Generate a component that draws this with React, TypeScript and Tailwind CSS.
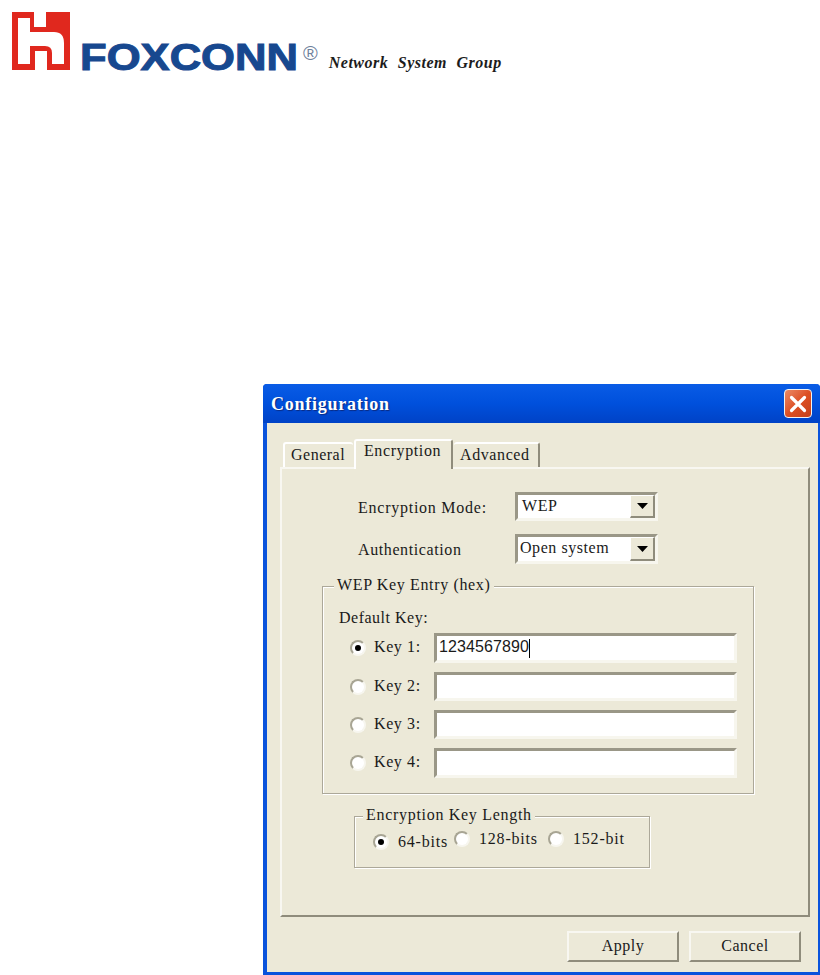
const serif = 'font-["Liberation_Serif",serif]';

function FoxconnLogo() {
  return (
    <div className="flex items-start">
      <svg width="60" height="60" viewBox="12 12 60 60" className="shrink-0">
        <rect x="12" y="12" width="58" height="58" fill="#e0281e" />
        <path d="M18 18H30V32H54Q64 32 64 43V64H52V53Q52 46 45 46H30V64H18Z" fill="#fff" />
        <rect x="34" y="12" width="12" height="15" fill="#fff" />
        <rect x="35" y="51" width="12" height="19" fill="#fff" />
      </svg>
      <svg width="224" height="70" viewBox="0 0 224 70" className="ml-[6px] shrink-0 overflow-visible">
        <text
          x="2"
          y="58"
          fontFamily="Liberation Sans, sans-serif"
          fontWeight="700"
          fontSize="36"
          textLength="218"
          lengthAdjust="spacingAndGlyphs"
          fill="#17488f"
          stroke="#17488f"
          strokeWidth="1"
        >
          FOXCONN
        </text>
      </svg>
      <span className='mt-[29px] ml-[1px] text-[20px] leading-[24px] text-[#6f7f9c] font-["Liberation_Sans",sans-serif]'>®</span>
      <span className={`mt-[41px] ml-[11px] text-[16px] leading-[20px] font-bold italic tracking-[0.5px] whitespace-nowrap text-[#1c1c1c] [word-spacing:5px] ${serif}`}>
        Network System Group
      </span>
    </div>
  );
}

function Radio({ checked = false }: { checked?: boolean }) {
  return (
    <span className="flex h-[16px] w-[16px] shrink-0 items-center justify-center rounded-full border-2 border-t-[#a8a594] border-r-[#f7f6ef] border-b-[#f7f6ef] border-l-[#a8a594] bg-white">
      {checked && <span className="h-[6px] w-[6px] rounded-full bg-black" />}
    </span>
  );
}

function Combo({ value, height, indent }: { value: string; height: string; indent: string }) {
  return (
    <div className={`flex w-[143px] items-stretch border-[3px] border-t-[#9a9787] border-r-[#f7f6ee] border-b-[#f7f6ee] border-l-[#9a9787] bg-white ${height}`}>
      <span className={`flex-1 text-[16px] leading-[21px] tracking-[0.55px] text-[#1a1a1a] ${indent}`}>{value}</span>
      <span className="flex w-[25px] items-center justify-center border-t border-r-2 border-b-2 border-l border-t-white border-r-[#8f8c7c] border-b-[#8f8c7c] border-l-white bg-[#ece9d8]">
        <svg width="11" height="6" viewBox="0 0 11 6">
          <path d="M0 0H11L5.5 6Z" fill="#000" />
        </svg>
      </span>
    </div>
  );
}

function KeyRow({ label, value, checked, height }: { label: string; value?: string; checked?: boolean; height: string }) {
  return (
    <div className="flex items-center">
      <Radio checked={checked} />
      <span className="ml-2 w-[60px] pb-[2px] text-[16px] leading-[20px] tracking-[0.6px] text-[#1a1a1a]">{label}</span>
      <div className={`flex w-[303px] items-center border-[3px] border-t-[#9a9787] border-r-[#f7f6ee] border-b-[#f7f6ee] border-l-[#9a9787] bg-white pl-[2px] ${height}`}>
        {value && (
          <>
            <span className='pb-[2px] text-[16px] leading-[20px] tracking-[0.1px] text-[#1a1a1a] font-["Liberation_Sans",sans-serif]'>{value}</span>
            <span className="h-[19px] w-px bg-black" />
          </>
        )}
      </div>
    </div>
  );
}

export default function App() {
  return (
    <div className={`h-[975px] w-[820px] overflow-hidden bg-white ${serif}`}>
      <header className="h-[384px] pt-[12px] pl-[12px]">
        <FoxconnLogo />
      </header>

      <div className="ml-[263px] flex h-[591px] w-[557px] flex-col rounded-t-[4px] border-r-2 border-b-[3px] border-l-4 border-[#0a53dc] bg-[#ece9d8]">
        {/* Title bar */}
        <div className="-ml-1 -mr-[2px] flex h-[39px] shrink-0 items-center justify-between rounded-t-[4px] bg-gradient-to-b from-[#0a5ce6] via-[#0050dc] to-[#0042c6] pr-[8px] pl-[8px]">
          <span className="pt-[2px] text-[18px] font-bold tracking-[0.75px] text-white [text-shadow:1px_1px_1px_#0a2a80]">Configuration</span>
          <span className="flex h-[29px] w-[28px] items-center justify-center rounded-[4px] border border-[#f2f2f2] bg-gradient-to-br from-[#ea8a66] via-[#dd4f22] to-[#c5401a]">
            <svg width="18" height="18" viewBox="0 0 18 18">
              <path d="M2.5 2.5L15.5 15.5M15.5 2.5L2.5 15.5" stroke="#fff" strokeWidth="3.2" strokeLinecap="round" />
            </svg>
          </span>
        </div>

        <div className="pt-[16px] pl-[13px]">
          {/* Tabs */}
          <div className="flex h-[28px] items-end pl-[3px] text-[16px] tracking-[0.5px] text-[#1a1a1a]">
            <div className="flex h-[25px] w-[70px] items-center rounded-t-[3px] border-t-2 border-l-2 border-white pb-[2px] pl-[6px]">General</div>
            <div className="relative z-10 -mb-[2px] ml-px flex h-[30px] w-[99px] items-start rounded-t-[3px] border-t-2 border-r-2 border-l-2 border-t-white border-r-[#8f8c7c] border-l-white bg-[#ece9d8] pl-[8px] leading-[20px] tracking-[0.6px]">Encryption</div>
            <div className="ml-px flex h-[25px] w-[86px] items-center rounded-t-[3px] border-t-2 border-r-2 border-t-white border-r-[#8f8c7c] pb-[2px] pl-[6px] tracking-[0.6px]">Advanced</div>
          </div>

          {/* Tab panel */}
          <div className="h-[450px] w-[530px] border-2 border-t-[#f8f7f1] border-r-[#8f8c7c] border-b-[#8f8c7c] border-l-[#f8f7f1] pt-[23px] text-[#1a1a1a]">
            <div className="flex items-center pl-[76px]">
              <span className="w-[157px] pt-[2px] text-[16px] leading-[20px] tracking-[0.75px]">Encryption Mode:</span>
              <Combo value="WEP" height="h-[29px]" indent="pl-[4px]" />
            </div>
            <div className="mt-[13px] flex items-center pl-[76px]">
              <span className="w-[157px] pt-[2px] text-[16px] leading-[20px] tracking-[0.6px]">Authentication</span>
              <Combo value="Open system" height="h-[30px]" indent="pl-[2px]" />
            </div>

            {/* WEP keys */}
            <div className="relative mt-[22px] ml-[40px] h-[208px] w-[432px] border border-[#aca899] pt-[21px] pl-[16px] shadow-[inset_1px_1px_0_#fff,1px_1px_0_#fff]">
              <span className="absolute -top-[12px] left-[11px] bg-[#ece9d8] px-[3px] text-[16px] leading-[20px] tracking-[0.65px]">WEP Key Entry (hex)</span>
              <div className="text-[16px] leading-[20px] tracking-[0.5px]">Default Key:</div>
              <div className="mt-[5px] ml-[11px] flex flex-col gap-[9px]">
                <KeyRow label="Key 1:" value="1234567890" checked height="h-[30px]" />
                <KeyRow label="Key 2:" height="h-[29px]" />
                <KeyRow label="Key 3:" height="h-[29px]" />
                <KeyRow label="Key 4:" height="h-[30px]" />
              </div>
            </div>

            {/* Key length */}
            <div className="relative mt-[22px] ml-[72px] flex h-[52px] w-[296px] items-start border border-[#aca899] pl-[18px] text-[16px] leading-[20px] tracking-[0.8px] shadow-[inset_1px_1px_0_#fff,1px_1px_0_#fff]">
              <span className="absolute -top-[12px] left-[8px] bg-[#ece9d8] px-[3px] tracking-[0.7px]">Encryption Key Length</span>
              <div className="mt-[15px] flex w-[81px] items-center gap-[9px]">
                <Radio checked />
                <span>64-bits</span>
              </div>
              <div className="mt-[12px] flex w-[94px] items-center gap-[9px]">
                <Radio />
                <span>128-bits</span>
              </div>
              <div className="mt-[12px] flex items-center gap-[9px]">
                <Radio />
                <span>152-bit</span>
              </div>
            </div>
          </div>

          {/* Buttons */}
          <div className="mt-[14px] flex w-[521px] justify-end gap-[10px] text-[16px] tracking-[0.5px] text-[#1a1a1a]">
            <button className="h-[31px] w-[112px] border-2 border-t-[#f8f7f1] border-r-[#8f8c7c] border-b-[#8f8c7c] border-l-[#f8f7f1] bg-[#ece9d8] pb-[2px]">Apply</button>
            <button className="h-[31px] w-[112px] border-2 border-t-[#f8f7f1] border-r-[#8f8c7c] border-b-[#8f8c7c] border-l-[#f8f7f1] bg-[#ece9d8] pb-[2px]">Cancel</button>
          </div>
        </div>
      </div>
    </div>
  );
}
